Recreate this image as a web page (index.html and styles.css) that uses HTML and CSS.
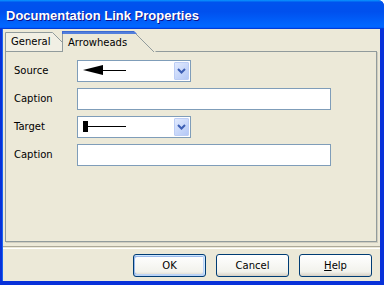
FILE: index.html
```html
<!DOCTYPE html>
<html lang="en">
<head>
  <meta charset="UTF-8">
  <title>Documentation Link Properties</title>
  <link rel="stylesheet" href="styles.css">
</head>
<body>

  <div class="window">
    <div class="titlebar">
      <span class="title">Documentation Link Properties</span>
    </div>

    <div class="window-body">

      <!-- Tab strip -->
      <div class="tabs">
        <div class="tab">
          <svg class="tab-shape" width="58" height="19" viewBox="0 0 58 19">
            <path d="M0.5 19 V0.5 H47.5 L57.5 10.5 V19" fill="#f1efe4" stroke="#919b9c"/>
          </svg>
          <span class="tab-label">General</span>
        </div>
        <div class="tab tab-active">
          <svg class="tab-shape" width="94" height="21" viewBox="0 0 94 21">
            <path d="M0 21 V0 H73 L94 21 Z" fill="#ece9d8"/>
            <path d="M0.5 21 V0.5" stroke="#919b9c"/>
            <path d="M73.5 2.5 L92 21" stroke="#919b9c"/>
            <path d="M0 0 H72 L75 3 H0 Z" fill="#3b6ad2"/>
            <path d="M1 2 H74" stroke="#6a93e6"/>
          </svg>
          <span class="tab-label">Arrowheads</span>
        </div>
      </div>

      <!-- Tab page -->
      <div class="pane">
        <div class="form">
          <span class="label">Source</span>
          <div class="combo">
            <svg class="arrow" width="44" height="20" viewBox="0 0 44 20">
              <path d="M1 9 L21 4 L21 14 Z" fill="#000"/>
              <path d="M20 9.5 H45" stroke="#000"/>
            </svg>
            <span class="combo-btn">
              <svg width="9" height="6" viewBox="0 0 9 6"><path d="M1 1 L4.5 4.5 L8 1" fill="none" stroke="#3d5fb4" stroke-width="2"/></svg>
            </span>
          </div>

          <span class="label">Caption</span>
          <div class="field"></div>

          <span class="label">Target</span>
          <div class="combo">
            <svg class="arrow" width="44" height="20" viewBox="0 0 44 20">
              <rect x="1" y="4" width="5" height="11" fill="#000"/>
              <path d="M5 9.5 H45" stroke="#000"/>
            </svg>
            <span class="combo-btn">
              <svg width="9" height="6" viewBox="0 0 9 6"><path d="M1 1 L4.5 4.5 L8 1" fill="none" stroke="#3d5fb4" stroke-width="2"/></svg>
            </span>
          </div>

          <span class="label">Caption</span>
          <div class="field"></div>
        </div>
      </div>

      <div class="separator"></div>

      <div class="buttons">
        <button class="btn btn-default">OK</button>
        <button class="btn">Cancel</button>
        <button class="btn"><u>H</u>elp</button>
      </div>

    </div>
  </div>

</body>
</html>
```

FILE: styles.css
```css
body {
  margin: 0;
  background-color: #ffffff;
  font-family: "DejaVu Sans", Verdana, sans-serif;
  font-size: 10px;
  color: #000;
}

/* Window frame */
.window {
  height: 285px;
  display: flex;
  flex-direction: column;
  background-color: #0831d9;
  border-radius: 0 6px 0 0;
  overflow: hidden;
}

.titlebar {
  height: 29px;
  display: flex;
  align-items: center;
  padding-left: 6px;
  background: linear-gradient(#0997ff 0, #0053ee 8%, #0050ee 40%, #0066ff 88%, #0066ff 93%, #005bff 95%, #003dd7 96%, #003dd7 100%);
}

.title {
  font-family: "Liberation Sans", Arial, sans-serif;
  font-weight: bold;
  font-size: 13px;
  color: #fff;
  text-shadow: 1px 1px #0f1089;
  padding-top: 2px;
}

.window-body {
  flex: 1;
  display: flex;
  flex-direction: column;
  margin: 0 4px 4px 3px;
  padding: 2px 3px 0 2px;
  background-color: #ece9d8;
  box-shadow: -1px 0 #1a62f0;
}

/* Tabs */
.tabs {
  display: flex;
  align-items: flex-end;
  height: 20px;
}

.tab {
  position: relative;
  width: 58px;
  height: 19px;
}

.tab-active {
  width: 94px;
  height: 21px;
  margin-left: -1px;
  margin-bottom: -1px;
  z-index: 1;
}

.tab-shape {
  position: absolute;
  left: 0;
  top: 0;
}

.tab-label {
  position: relative;
  display: block;
  padding: 4px 0 0 6px;
}

.tab-active .tab-label {
  padding-top: 6px;
}

/* Tab page */
.pane {
  height: 189px;
  border: 1px solid #919b9c;
  box-shadow: 1px 1px #d0cdbf;
}

.form {
  display: grid;
  grid-template-columns: 63px auto;
  grid-auto-rows: 22px;
  row-gap: 6px;
  align-items: center;
  padding: 8px 0 0 8px;
}

.label {
  line-height: 22px;
}

.field,
.combo {
  height: 20px;
  border: 1px solid #7f9db9;
  background-color: #fff;
}

.field {
  width: 252px;
}

.combo {
  width: 112px;
  display: flex;
  align-items: center;
  justify-content: space-between;
}

.arrow {
  margin-left: 4px;
}

.combo-btn {
  width: 15px;
  height: 18px;
  margin-right: 1px;
  display: flex;
  align-items: center;
  justify-content: center;
  border: 1px solid #bccdf5;
  border-radius: 1px;
  background: linear-gradient(135deg, #e1eafe, #b4c8f6);
  box-sizing: border-box;
}

/* Separator and buttons */
.separator {
  margin: 4px -3px 0 -2px;
  height: 1px;
  border-top: 1px solid #aca899;
  border-bottom: 1px solid #fff;
}

.buttons {
  display: flex;
  justify-content: flex-end;
  gap: 10px;
  margin-top: 5px;
  padding-right: 5px;
}

.btn {
  width: 73px;
  height: 23px;
  padding: 0;
  font-family: inherit;
  font-size: 10px;
  color: #000;
  border: 1px solid #003c74;
  border-radius: 3px;
  background: linear-gradient(#ffffff, #f2f2ec 80%, #d6d0c5);
}

.btn-default {
  box-shadow: inset -1px 1px #cee7ff, inset 1px 2px #98b8ea, inset -2px -2px #bcd4f6, inset 1px -2px #89ade4;
}
```
